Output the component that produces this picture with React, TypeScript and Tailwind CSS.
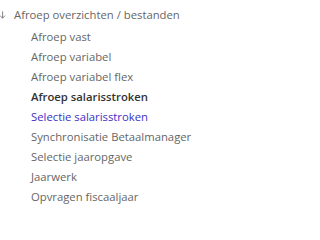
const items: { label: string; kind?: "bold" | "link" }[] = [
  { label: "Afroep vast" },
  { label: "Afroep variabel" },
  { label: "Afroep variabel flex" },
  { label: "Afroep salarisstroken", kind: "bold" },
  { label: "Selectie salarisstroken", kind: "link" },
  { label: "Synchronisatie Betaalmanager" },
  { label: "Selectie jaaropgave" },
  { label: "Jaarwerk" },
  { label: "Opvragen fiscaaljaar" },
];

export default function App() {
  return (
    <div className="w-[226px] h-[211px] bg-white font-['Open_Sans',sans-serif] text-[11.3px] text-[#666666] overflow-hidden">
      <div className="flex items-center h-[20px] mt-[5px]">
        <svg className="w-[14px] h-[8px] shrink-0" viewBox="0 0 14 8">
          <path d="M2.6 0.3 V7.2 M0.2 4.6 L2.6 7.2 L5 4.6" fill="none" stroke="#777777" strokeWidth="0.9" />
        </svg>
        <span>Afroep overzichten / bestanden</span>
      </div>
      <ul className="mt-[2px] pl-[31px]">
        {items.map((item) => (
          <li
            key={item.label}
            className={
              "h-[20px] leading-[20px] whitespace-nowrap " +
              (item.kind === "bold"
                ? "font-semibold text-[#333333]"
                : item.kind === "link"
                ? "text-[#3b2fc4]"
                : "")
            }
          >
            {item.label}
          </li>
        ))}
      </ul>
    </div>
  );
}
